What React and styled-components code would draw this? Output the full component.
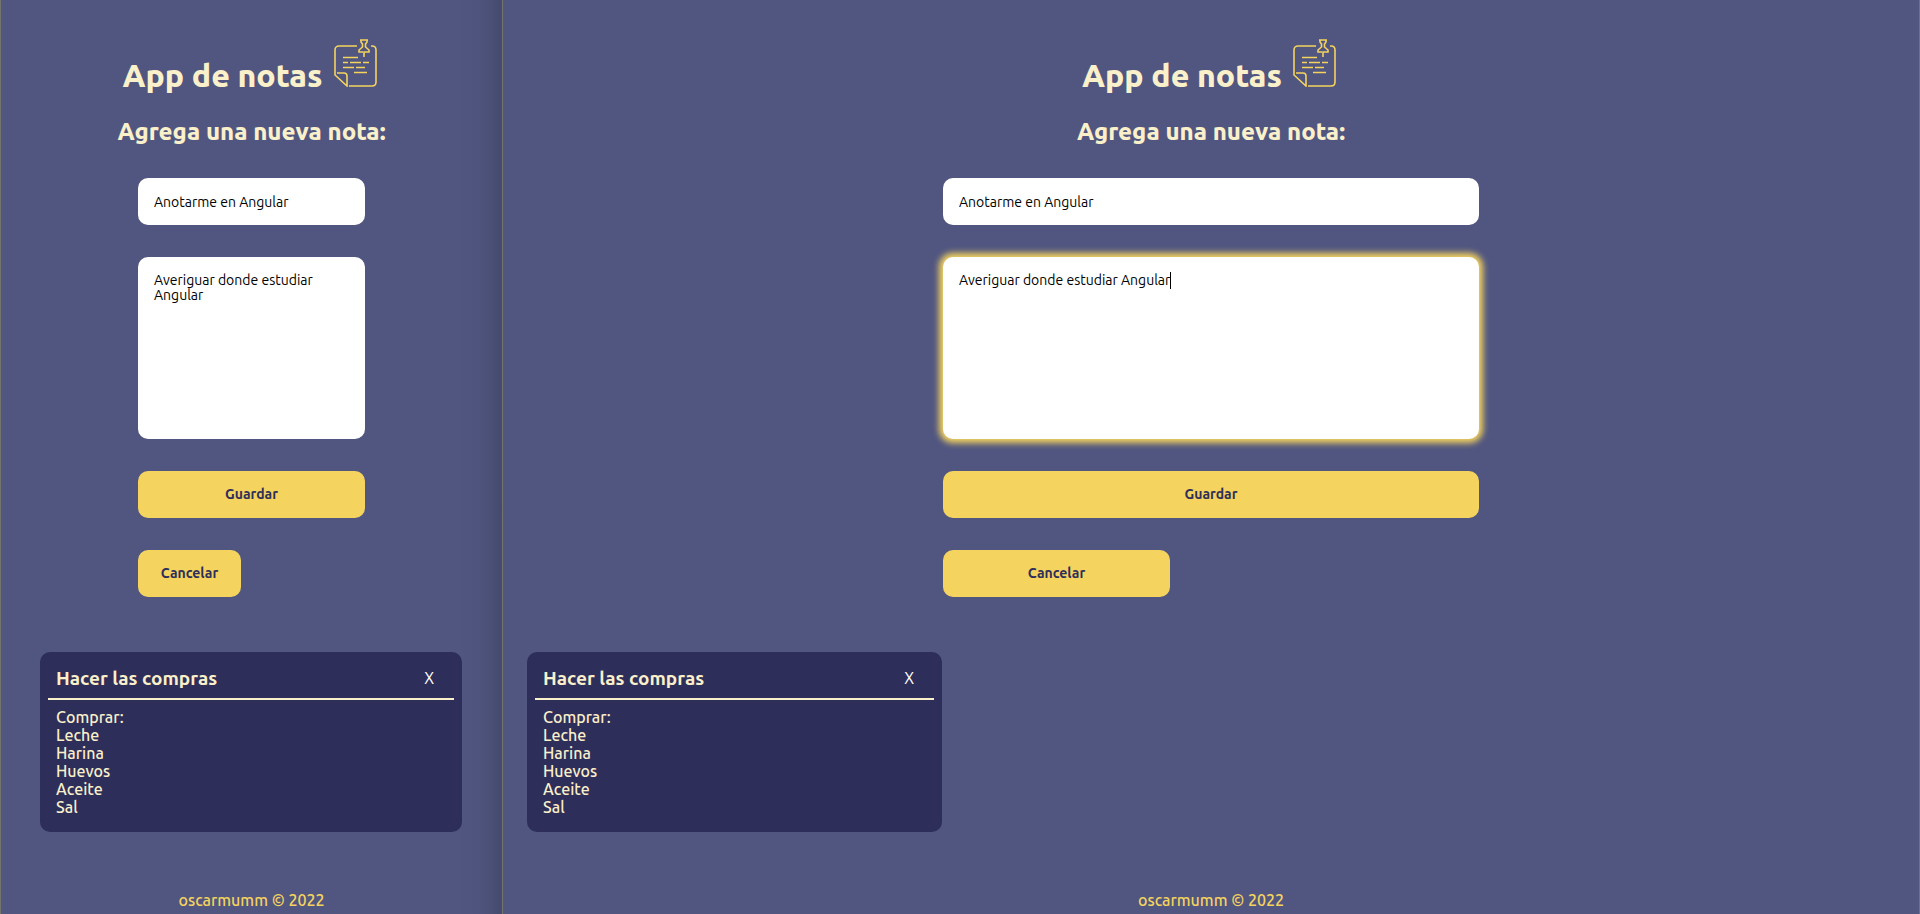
import React from 'react';
import styled, { createGlobalStyle } from 'styled-components';

const GlobalStyle = createGlobalStyle`
  * { box-sizing: border-box; }
  body {
    margin: 0;
    background: #515681;
    color: #faf0ca;
    font-family: Ubuntu, 'Noto Sans', sans-serif;
    font-size: 16px;
    line-height: 18px;
  }
`;

const Screens = styled.div`
  display: flex;
  min-height: 100vh;
`;

const Screen = styled.section`
  display: flex;
  flex-direction: column;
  flex: ${(p) => (p.$narrow ? '0 0 503px' : '1 1 0')};
  min-width: 0;
  border: solid #74746f;
  border-width: ${(p) => (p.$narrow ? '0 1px' : '0 1px 0 0')};
  background: ${(p) =>
    p.$narrow
      ? 'linear-gradient(to left, #444a6d, #4b5077 12px, #4f547e 24px, #515681 44px)'
      : '#515681'};
`;

const Header = styled.header`
  display: flex;
  flex-direction: column;
  align-items: center;
  padding-top: 36px;
`;

const Title = styled.h1`
  display: flex;
  align-items: baseline;
  gap: 8px;
  margin: 0;
  font-size: 32px;
  font-weight: 800;
  line-height: 46px;
`;

const Subtitle = styled.h2`
  margin: 18px 0 0;
  font-size: 24px;
  font-weight: 800;
  line-height: 32px;
`;

const Form = styled.form`
  display: flex;
  flex-direction: column;
  align-items: stretch;
  gap: 32px;
  width: ${(p) => (p.$narrow ? '227px' : '536px')};
  max-width: 100%;
  margin: 30px auto 0;
`;

const Field = styled.label`
  display: block;
  position: relative;
`;

const fieldStyle = `
  display: block;
  width: 100%;
  padding: 16px;
  border: 0;
  border-radius: 10px;
  outline: 0;
  background: #fff;
  color: #000;
  font: 14px/15px Ubuntu, 'Noto Sans', sans-serif;
`;

const TextInput = styled.input`
  ${fieldStyle}
  height: 47px;
`;

const TextArea = styled.textarea`
  ${fieldStyle}
  height: 182px;
  resize: none;
  box-shadow: ${(p) => (p.$active ? '0 0 6px 4px #f4d35e' : 'none')};
`;

const Caret = styled.span`
  position: absolute;
  top: 15px;
  left: 227px;
  width: 1px;
  height: 17px;
  background: #000;
`;

const Button = styled.button`
  width: ${(p) => p.$width || '100%'};
  height: 47px;
  padding: 0;
  border: 0;
  border-radius: 10px;
  background: #f4d35e;
  color: #2e2e5b;
  font: 700 14px/15px Ubuntu, 'Noto Sans', sans-serif;
`;

const Notes = styled.main`
  display: flex;
  margin: ${(p) => (p.$narrow ? '55px 40px 0 39px' : '55px 24px 0')};
`;

const Card = styled.article`
  flex: 0 1 ${(p) => (p.$narrow ? '100%' : '415px')};
  padding: 8px 8px 16px;
  border-radius: 10px;
  background: #2e2e5b;
`;

const CardHeader = styled.div`
  display: flex;
  align-items: center;
  justify-content: space-between;
  height: 40px;
  padding: 0 20px 2px 8px;
  border-bottom: 2px solid #faf0ca;
`;

const CardTitle = styled.h3`
  margin: 0;
  font-size: 19px;
  line-height: 24px;
`;

const Remove = styled.button`
  padding: 0;
  border: 0;
  background: none;
  color: #fff;
  font: 16px/18px Ubuntu, 'Noto Sans', sans-serif;
`;

const CardText = styled.p`
  margin: 0;
  padding: 8px 8px 0;
  font-weight: 500;
  white-space: pre-line;
`;

const Footer = styled.footer`
  margin-top: auto;
  padding-bottom: 5px;
  color: #f4d35e;
  font-weight: 500;
  text-align: center;
`;

const NoteIcon = () => (
  <svg width="50" height="51" viewBox="0 0 50 51" fill="none" stroke="#f4d35e" strokeWidth="1.6" aria-hidden="true">
    <path d="M26 10H8a4 4 0 0 0-4 4v25l12 11V40q0-3-3-3H6M18 50h23q4 0 4-4V14q0-4-4-4h-1" />
    <path d="M29 4h8M30 4v2l1.500 2v3l-3.500 3v2h4M36 4v2l-1.500 2v3l3.500 3v2h-5v5" />
    <path d="M12 21.500h15M12 26.500h5m2 0h11m2 0h6M12 31.500h11m2 0h9M23 36.500h13" />
  </svg>
);

const items = 'Comprar:\nLeche\nHarina\nHuevos\nAceite\nSal';

const NotesApp = ({ id, narrow, active }) => (
  <Screen $narrow={narrow}>
    <Header>
      <Title>App de notas <NoteIcon /></Title>
      <Subtitle>Agrega una nueva nota:</Subtitle>
    </Header>
    <Form $narrow={narrow} onSubmit={(e) => e.preventDefault()}>
      <Field htmlFor={`${id}-title`}>
        <TextInput id={`${id}-title`} aria-label="Título" defaultValue="Anotarme en Angular" />
      </Field>
      <Field htmlFor={`${id}-text`}>
        <TextArea id={`${id}-text`} aria-label="Nota" $active={active} defaultValue="Averiguar donde estudiar Angular" />
        {active && <Caret />}
      </Field>
      <Button type="submit">Guardar</Button>
      <Button type="button" $width={narrow ? '103px' : '227px'}>Cancelar</Button>
    </Form>
    <Notes $narrow={narrow}>
      <Card $narrow={narrow}>
        <CardHeader>
          <CardTitle>Hacer las compras</CardTitle>
          <Remove type="button" aria-label="Eliminar">X</Remove>
        </CardHeader>
        <CardText>{items}</CardText>
      </Card>
    </Notes>
    <Footer>oscarmumm © 2022</Footer>
  </Screen>
);

export default function App() {
  return (
    <>
      <GlobalStyle />
      <Screens>
        <NotesApp id="mobile" narrow />
        <NotesApp id="desktop" active />
      </Screens>
    </>
  );
}
